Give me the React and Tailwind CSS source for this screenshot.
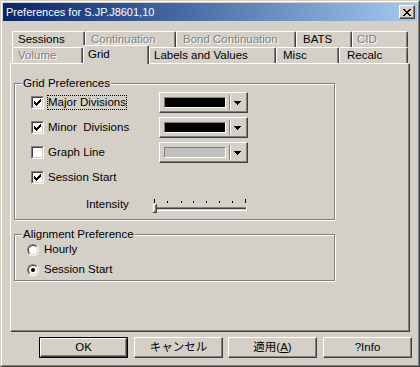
import React from "react";

const face = "bg-[#d4d0c8]";

function Check({ checked }) {
  return (
    <span className="block w-[13px] h-[13px] border border-t-[#808080] border-l-[#808080] border-r-white border-b-white">
      <span className="block w-full h-full border border-t-[#404040] border-l-[#404040] border-r-[#d4d0c8] border-b-[#d4d0c8] bg-white">
        {checked && (
          <svg width="9" height="9" viewBox="0 0 9 9" shapeRendering="crispEdges" className="block">
            <path d="M1 3h1v3H1zM2 4h1v3H2zM3 5h1v3H3zM4 4h1v3H4zM5 3h1v3H5zM6 2h1v3H6zM7 1h1v3H7z" fill="#000" />
          </svg>
        )}
      </span>
    </span>
  );
}

function Radio({ checked }) {
  return (
    <span className="block w-[12px] h-[12px] rounded-full border border-t-[#808080] border-l-[#808080] border-r-white border-b-white">
      <span className="flex items-center justify-center w-full h-full rounded-full border border-t-[#404040] border-l-[#404040] border-r-[#d4d0c8] border-b-[#d4d0c8] bg-white">
        {checked && <span className="block w-[4px] h-[4px] rounded-full bg-black" />}
      </span>
    </span>
  );
}

function Combo({ color }) {
  return (
    <div className="w-[89px] h-[21px] flex items-center border border-t-white border-l-white border-r-[#404040] border-b-[#404040] shadow-[inset_-1px_-1px_0_#808080]">
      <span
        className="ml-[4px] w-[62px] h-[11px] border border-t-[#808080] border-l-[#808080] border-r-white border-b-white"
        style={{ background: color }}
      />
      <span className="ml-[3px] h-[15px] w-[2px] border-l border-l-[#808080] border-r border-r-white" />
      <svg width="7" height="4" viewBox="0 0 7 4" shapeRendering="crispEdges" className="ml-[3px] block">
        <path d="M0 0h7v1H0zM1 1h5v1H1zM2 2h3v1H2zM3 3h1v1H3z" fill="#000" />
      </svg>
    </div>
  );
}

function Group({ label, className, children }) {
  return (
    <div className={"relative border border-[#808080] shadow-[inset_1px_1px_0_#fff,1px_1px_0_#fff] " + className}>
      <span className="absolute left-[7px] -top-[8px] px-[1px] leading-[14px] bg-[#d4d0c8]">{label}</span>
      {children}
    </div>
  );
}

function Tab({ w, pad, label, disabled }) {
  return (
    <div
      className={
        "h-[16px] flex items-center rounded-t-[2px] border-t border-l border-white border-r border-r-[#404040] shadow-[inset_-1px_0_0_#808080] " +
        (disabled ? "text-[#808080] [text-shadow:1px_1px_0_#fff]" : "")
      }
      style={{ width: w, paddingLeft: pad }}
    >
      {label}
    </div>
  );
}

function Button({ children, isDefault, className }) {
  return (
    <div className={(isDefault ? "border border-black " : "") + "w-[89px] h-[21px] " + className}>
      <div className="w-full h-full flex items-center justify-center border border-t-white border-l-white border-r-[#404040] border-b-[#404040] shadow-[inset_-1px_-1px_0_#808080]">
        {children}
      </div>
    </div>
  );
}

function Slider() {
  const ticks = [14, 28, 40, 53, 66, 79];
  return (
    <svg width="95" height="15" viewBox="0 0 95 15" shapeRendering="crispEdges" className="block">
      <rect x="1" y="1" width="1" height="4" fill="#000" />
      <rect x="92" y="1" width="1" height="4" fill="#000" />
      {ticks.map((x) => (
        <rect key={x} x={x} y="3" width="1" height="2" fill="#000" />
      ))}
      <rect x="1" y="9" width="93" height="1" fill="#808080" />
      <rect x="2" y="10" width="91" height="1" fill="#404040" />
      <rect x="2" y="11" width="91" height="1" fill="#d4d0c8" />
      <rect x="1" y="12" width="93" height="1" fill="#fff" />
      <rect x="93" y="9" width="1" height="4" fill="#fff" />
      <rect x="0" y="6" width="4" height="9" fill="#404040" />
      <rect x="0" y="6" width="3" height="8" fill="#fff" />
      <rect x="1" y="7" width="2" height="7" fill="#808080" />
      <rect x="1" y="7" width="1" height="6" fill="#d4d0c8" />
    </svg>
  );
}

export default function App() {
  return (
    <div className="w-[420px] h-[367px] bg-[#d4d0c8] border border-t-[#d4d0c8] border-l-[#d4d0c8] border-r-[#404040] border-b-[#404040] text-[11.5px] leading-none text-black font-['Liberation_Sans','Noto_Sans_CJK_JP',sans-serif]">
      <div className="h-full p-px flex flex-col border border-t-white border-l-white border-r-[#808080] border-b-[#808080]">
        {/* title bar */}
        <div className="h-[18px] flex items-center pl-[3px] pr-[2px] bg-gradient-to-r from-[#0a246a] to-[#a6caf0]">
          <span className="flex-1 text-white text-[11px]">Preferences for S.JP.J8601,10</span>
          <div className={"w-[16px] h-[14px] flex items-center justify-center border border-t-white border-l-white border-r-[#404040] border-b-[#404040] shadow-[inset_-1px_-1px_0_#808080] " + face}>
            <svg width="8" height="7" viewBox="0 0 8 7" shapeRendering="crispEdges" className="block">
              <path d="M0 0h2v1H0zM6 0h2v1H6zM1 1h2v1H1zM5 1h2v1H5zM2 2h4v1H2zM3 3h2v1H3zM2 4h4v1H2zM1 5h2v1H1zM5 5h2v1H5zM0 6h2v1H0zM6 6h2v1H6z" fill="#000" />
            </svg>
          </div>
        </div>

        {/* tabs */}
        <div className="mt-[10px] ml-[7px] w-[400px]">
          <div className="flex pl-[2px]">
            <Tab w={73} pad={5} label="Sessions" />
            <Tab w={91} pad={5} label="Continuation" disabled />
            <Tab w={120} pad={6} label="Bond Continuation" disabled />
            <Tab w={56} pad={6} label="BATS" />
            <Tab w={56} pad={4} label="CID" disabled />
          </div>
          <div className="flex items-start h-[16px] pl-[2px]">
            <Tab w={71} pad={5} label="Volume" disabled />
            <div className="relative z-10 w-[66px] h-[19px] -mt-[2px] pl-[4px] flex items-center rounded-t-[2px] bg-[#d4d0c8] border-t border-l border-white border-r border-r-[#404040] shadow-[inset_-1px_0_0_#808080]">
              Grid
            </div>
            <Tab w={127} pad={4} label="Labels and Values" />
            <Tab w={63} pad={6} label="Misc" />
            <Tab w={69} pad={7} label="Recalc" />
          </div>

          {/* panel */}
          <div className="h-[269px] pt-[19px] pl-[3px] border border-t-white border-l-white border-r-[#404040] border-b-[#404040] shadow-[inset_-1px_-1px_0_#808080]">
            <Group label="Grid Preferences" className="w-[321px] h-[137px] pt-[6px]">
              {[
                ["Major Divisions", true, "#000", true],
                ["Minor  Divisions", true, "#000", false],
                ["Graph Line", false, "#c0c0c0", false],
              ].map(([label, checked, color, focus]) => (
                <div key={label} className="h-[25px] grid grid-cols-[144px_89px] items-center">
                  <div className="flex items-center pl-[16px]">
                    <Check checked={checked} />
                    <span
                      className={
                        "ml-[3px] px-0 py-[1px] whitespace-pre border " +
                        (focus ? "border-dotted border-black" : "border-transparent")
                      }
                    >
                      {label}
                    </span>
                  </div>
                  <Combo color={color} />
                </div>
              ))}
              <div className="h-[25px] flex items-center pl-[16px]">
                <Check checked />
                <span className="ml-[3px] py-[1px] border border-transparent">Session Start</span>
              </div>
              <div className="h-[30px] flex items-center pl-[71px]">
                <span className="w-[67px]">Intensity</span>
                <Slider />
              </div>
            </Group>

            <Group label="Alignment Preference" className="mt-[14px] w-[321px] h-[47px] pt-[5px]">
              <div className="h-[20px] flex items-center pl-[12px]">
                <Radio />
                <span className="ml-[5px]">Hourly</span>
              </div>
              <div className="h-[20px] flex items-center pl-[12px]">
                <Radio checked />
                <span className="ml-[5px]">Session Start</span>
              </div>
            </Group>
          </div>
        </div>

        {/* buttons */}
        <div className="mt-[5px] flex pl-[36px]">
          <Button isDefault>OK</Button>
          <Button className="ml-[6px]">キャンセル</Button>
          <Button className="ml-[5px]">
            適用(<u>A</u>)
          </Button>
          <Button className="ml-[6px]">?Info</Button>
        </div>
      </div>
    </div>
  );
}
